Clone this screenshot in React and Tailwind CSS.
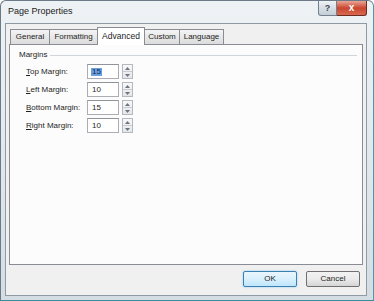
import React from "react";

const TABS = [
  { name: "General", w: "w-[40px]" },
  { name: "Formatting", w: "w-[49px]" },
  { name: "Advanced", w: "w-[48px]", active: true },
  { name: "Custom", w: "w-[36px]" },
  { name: "Language", w: "w-[45px]" },
];

const MARGINS = [
  { key: "T", rest: "op Margin:", value: "15", selected: true },
  { key: "L", rest: "eft Margin:", value: "10" },
  { key: "B", rest: "ottom Margin:", value: "15" },
  { key: "R", rest: "ight Margin:", value: "10" },
];

function Spinner() {
  return (
    <div className="ml-[3px] flex h-[15px] w-[11px] flex-col border border-[#b4b9bf] bg-gradient-to-b from-[#f7f8f9] to-[#e4e7ea]">
      <div className="flex flex-1 items-center justify-center border-b border-[#c9cdd2]">
        <svg width="5" height="3" viewBox="0 0 5 3">
          <path d="M0 3 L2.5 0 L5 3 Z" fill="#6b7480" />
        </svg>
      </div>
      <div className="flex flex-1 items-center justify-center">
        <svg width="5" height="3" viewBox="0 0 5 3">
          <path d="M0 0 L2.5 3 L5 0 Z" fill="#6b7480" />
        </svg>
      </div>
    </div>
  );
}

export default function App() {
  return (
    <div
      className="relative h-[301px] w-[374px] overflow-hidden rounded-t-[6px] border border-[#6b7a86] border-r-[#4d98a8] border-b-[#3a8e9c] bg-gradient-to-b from-[#eef2f5] via-[#e2e9ee] to-[#d3dde3] text-[#1e1e1e]"
      style={{ fontFamily: '"Liberation Sans", Arial, sans-serif' }}
    >
      {/* title bar */}
      <div className="flex h-[22px] items-start justify-between pl-[7px]">
        <span className="mt-[6px] text-[9px] leading-none text-[#1a1a1a]">Page Properties</span>
        <div className="mr-[6px] flex">
          <div className="flex h-[15px] w-[19px] items-center justify-center rounded-bl-[3px] border border-t-0 border-[#71808c] bg-gradient-to-b from-[#eef2f5] via-[#d6dee4] to-[#c3ced6] text-[9px] font-bold leading-none text-[#3c4650]">
            ?
          </div>
          <div className="flex h-[15px] w-[30px] items-center justify-center rounded-br-[3px] border border-l-0 border-t-0 border-[#6e2b22] bg-gradient-to-b from-[#e9a496] via-[#c9452f] to-[#d86a4f] text-[10px] font-bold leading-none text-white">
            x
          </div>
        </div>
      </div>

      {/* client area */}
      <div className="ml-[4px] flex h-[273px] w-[362px] flex-col border border-[#8e9aa4] bg-[#f0f0f0] text-[8px] leading-none">
        {/* tabs */}
        <div className="ml-[5px] flex h-[20px] items-end">
          {TABS.map((t) =>
            t.active ? (
              <div
                key={t.name}
                className={`relative z-10 -mb-px -ml-px flex h-[18px] ${t.w} items-start justify-center border border-b-0 border-[#898c95] bg-white pt-[4px] text-[8.5px]`}
              >
                {t.name}
              </div>
            ) : (
              <div
                key={t.name}
                className={`-ml-px flex h-[15px] ${t.w} items-center justify-center border border-b-0 border-[#898c95] bg-gradient-to-b from-[#f4f4f4] to-[#dcdcdc]`}
              >
                {t.name}
              </div>
            )
          )}
        </div>

        {/* panel */}
        <div className="ml-[3px] flex h-[221px] w-[354px] flex-col border border-[#898c95] bg-[#fcfcfc]">
          <div className="mt-[5px] flex h-[10px] items-center pl-[9px]">
            <span>Margins</span>
            <div className="ml-[3px] mr-[5px] h-px flex-1 bg-[#d0d5d9]" />
          </div>

          <div className="mt-[4px] flex flex-col gap-[3px] pl-[16px]">
            {MARGINS.map((m) => (
              <div key={m.key} className="flex h-[15px] items-center">
                <span className="w-[61px]">
                  <span className="underline">{m.key}</span>
                  {m.rest}
                </span>
                <div className="flex h-[15px] w-[32px] items-center border border-[#abadb3] border-t-[#8f939a] bg-white pl-[3px]">
                  {m.selected ? (
                    <span className="bg-[#6aa2dc] px-px text-[#13285a]">{m.value}</span>
                  ) : (
                    <span className="px-px">{m.value}</span>
                  )}
                </div>
                <Spinner />
              </div>
            ))}
          </div>
        </div>

        {/* buttons */}
        <div className="mt-[6px] flex justify-end gap-[9px] pr-[6px]">
          <button className="flex h-[16px] w-[54px] items-center justify-center rounded-[2px] border border-[#3c7fb1] bg-gradient-to-b from-[#eaf6fd] via-[#d9f0fc] to-[#bee6fd] shadow-[0_0_2px_#7fc6ee]">
            OK
          </button>
          <button className="flex h-[16px] w-[54px] items-center justify-center rounded-[2px] border border-[#707070] bg-gradient-to-b from-[#f2f2f2] via-[#ebebeb] to-[#d5d5d5]">
            Cancel
          </button>
        </div>
      </div>
    </div>
  );
}
